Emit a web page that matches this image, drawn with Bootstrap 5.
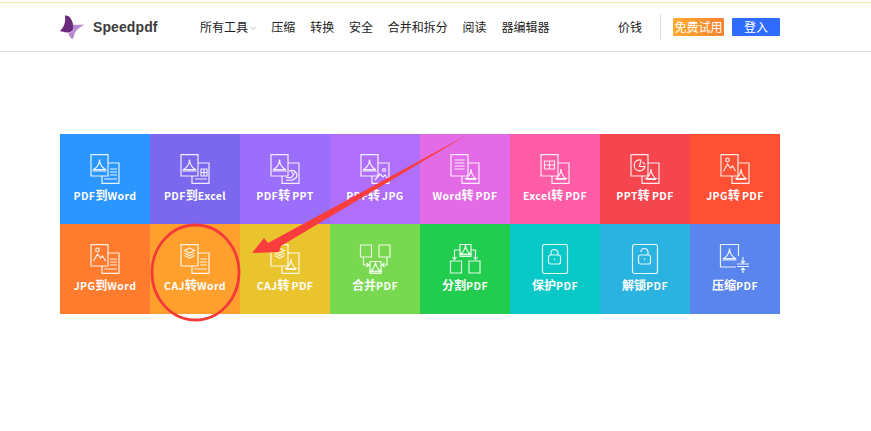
<!DOCTYPE html>
<html lang="zh">
<head>
<meta charset="utf-8">
<title>Speedpdf</title>
<link href="https://cdn.jsdelivr.net/npm/bootstrap@5.3.0/dist/css/bootstrap.min.css" rel="stylesheet">
<style>
body{background:#fff;font-family:"Noto Sans CJK SC","Liberation Sans",sans-serif;overflow:hidden;height:431px;position:relative}
.top-strip{background:#fff;border-bottom:1px solid #fde9a6;height:2px;box-sizing:content-box}
.site-head{border-bottom:1px solid #e2e2e2;padding:0 91px 0 60px;box-sizing:content-box;height:48px}
.logo-mark{width:26px;height:26px;flex:none}
.logo-name{font:700 14px/1 "Liberation Sans",sans-serif;color:#3c3c3c;margin-left:7px;width:64px;letter-spacing:.1px}
.nav-zone{margin-left:43px;gap:14.8px;font-size:12px;color:#222;line-height:18px}
.nav-chev{width:10px;height:6px;margin-top:2px;margin-right:-1.5px}
.price-link{margin-left:auto;font-size:12px;color:#222}
.head-rule{width:1px;height:26px;background:#ddd;margin:0 12px 0 18px}
.try-btn,.login-btn{height:18px;font-size:12px;line-height:18px;color:#fff;text-align:center;border-radius:1px}
.try-btn{width:51px;background:linear-gradient(90deg,#ffab2e,#f58132)}
.login-btn{width:48px;background:#2e6cff;margin-left:8px}
.tool-grid{display:grid;grid-template-columns:repeat(8,90px);grid-auto-rows:90px;margin:82px 0 0 60px}
.tool-tile{padding-top:20px;color:#fff;text-decoration:none}
.tool-icon{width:30px;height:30px;margin-left:30px;display:block;overflow:visible;fill:none;stroke:#fff;stroke-width:1.2;stroke-opacity:.88}
.tool-name{font-size:10.5px;font-weight:700;line-height:14px;text-align:center;margin-top:4px;letter-spacing:.4px;white-space:nowrap}
.cjk-part{font-size:12px;letter-spacing:0}
.cjk-gap{margin-right:2px}
.t1{background:#2b96ff}.t2{background:#7b68ee}.t3{background:#9b6ffb}.t4{background:#b06ffb}
.t5{background:#e36ce6}.t6{background:#ff5ca8}.t7{background:#f5464f}.t8{background:#ff5033}
.t9{background:#ff7b2e}.t10{background:#ff9f2e}.t11{background:#eac42e}.t12{background:#78d84f}
.t13{background:#22cc4f}.t14{background:#08c8c8}.t15{background:#2ab2e0}.t16{background:#5a85ec}
.mark-layer{position:absolute;left:0;top:0;width:871px;height:431px;pointer-events:none}
</style>
</head>
<body>
<svg width="0" height="0" class="position-absolute">
<defs>
<g id="g-pdf"><path d="M0-6.500C0-2-3 2.500-6.500 3.500H6.500C3 2.500 0-2 0-6.500ZM-7 4.800H7"/></g>
<g id="g-pdfs"><path d="M0-6C0-2-2.500 2-5 3.500H5C2.500 2 0-2 0-6ZM-5 4.500H5"/></g>
<g id="g-word"><path d="M-5-5H5M-5-2H5M-5 1H5M-5 4H5"/></g>
<g id="g-back-word"><path d="M-1-5H6M-1-2H6M-1 1H6M-7 5H6"/></g>
<g id="g-back-xls"><path d="M0-5H6V2H0ZM3-5V2M0-1.500H6M-6 5H6"/></g>
<g id="g-back-ppt"><path d="M-2-3C2-5 6-2 6 1C6 5 1 7-5 6M-5 3C0 5 3 3 2-1M0-3L3 1M3-1L6-1"/></g>
<g id="g-back-img"><path d="M-6 6L-1 0L2 3L4 1L7 5"/><circle cx="3" cy="-4" r="1.500"/></g>
<g id="g-xls"><path d="M-5-4H5V4H-5ZM0-4V4M-5 0H5"/></g>
<g id="g-ppt"><path d="M1.500-5A5.500 5.500 0 1 0 5.500 1.500H0Z M2.500-2.500A3 3 0 0 1 5.500-.5"/></g>
<g id="g-img"><path d="M-6 6L-2-1L1 3L3 1L6 6"/><circle cx="-2" cy="-5" r="1.800"/></g>
<g id="g-caj"><path d="M0-6L5-3.500L0-1L-5-3.500ZM-5-1L0 1.500L5-1M-5 1.500L0 4L5 1.500"/></g>
<path id="f-front" d="M1 .7H18V22H1Z"/>
<path id="f-back" d="M18 9H29V29.300H12V22"/>
</defs>
</svg>

<div class="top-strip"></div>
<header class="site-head d-flex align-items-center">
  <svg class="logo-mark" viewBox="60 14 26 26"><path fill="#6b2a7c" d="M65 15.500C70 15 72 20 73 24C75 29 72 33 67 32.500C64 32 62 31.500 60 31C63 28 66 24 65 15.500Z"/><path fill="#b88ad0" d="M69 24C74 25 79 25 84 24.500C80 28 76 29 74.500 34C74 37 73 39 72 39C69 37 69 34 68 32.600C72 33 75 29 73.500 25Z"/></svg>
  <span class="logo-name">Speedpdf</span>
  <nav class="nav-zone d-flex align-items-center">
    <span class="d-flex align-items-center">所有工具<svg class="nav-chev" viewBox="0 0 10 6" fill="none" stroke="#bbb" stroke-width="1"><path d="M2 1.500L5 4.500L8 1.500"/></svg></span>
    <span>压缩</span><span>转换</span><span>安全</span><span>合并和拆分</span><span>阅读</span><span>器编辑器</span>
  </nav>
  <span class="price-link">价钱</span>
  <span class="head-rule"></span>
  <span class="try-btn">免费试用</span>
  <span class="login-btn">登入</span>
</header>

<main class="tool-grid">
  <a class="tool-tile t1"><svg class="tool-icon" viewBox="0 0 30 30"><use href="#f-front"/><use href="#g-pdf" x="9.500" y="12"/><use href="#f-back"/><use href="#g-back-word" x="21" y="20"/></svg><div class="tool-name">PDF<span class="cjk-part">到</span>Word</div></a>
  <a class="tool-tile t2"><svg class="tool-icon" viewBox="0 0 30 30"><use href="#f-front"/><use href="#g-pdf" x="9.500" y="12"/><use href="#f-back"/><use href="#g-back-xls" x="21" y="20"/></svg><div class="tool-name">PDF<span class="cjk-part">到</span>Excel</div></a>
  <a class="tool-tile t3"><svg class="tool-icon" viewBox="0 0 30 30"><use href="#f-front"/><use href="#g-pdf" x="9.500" y="12"/><use href="#f-back"/><use href="#g-back-ppt" x="21" y="20"/></svg><div class="tool-name">PDF<span class="cjk-part cjk-gap">转</span>PPT</div></a>
  <a class="tool-tile t4"><svg class="tool-icon" viewBox="0 0 30 30"><use href="#f-front"/><use href="#g-pdf" x="9.500" y="12"/><use href="#f-back"/><use href="#g-back-img" x="21" y="20"/></svg><div class="tool-name">PDF<span class="cjk-part cjk-gap">转</span>JPG</div></a>
  <a class="tool-tile t5"><svg class="tool-icon" viewBox="0 0 30 30"><use href="#f-front"/><use href="#g-word" x="9.500" y="11"/><use href="#f-back"/><use href="#g-pdfs" x="21" y="21"/></svg><div class="tool-name">Word<span class="cjk-part cjk-gap">转</span>PDF</div></a>
  <a class="tool-tile t6"><svg class="tool-icon" viewBox="0 0 30 30"><use href="#f-front"/><use href="#g-xls" x="9.500" y="11"/><use href="#f-back"/><use href="#g-pdfs" x="21" y="21"/></svg><div class="tool-name">Excel<span class="cjk-part cjk-gap">转</span>PDF</div></a>
  <a class="tool-tile t7"><svg class="tool-icon" viewBox="0 0 30 30"><use href="#f-front"/><use href="#g-ppt" x="9.500" y="11"/><use href="#f-back"/><use href="#g-pdfs" x="21" y="21"/></svg><div class="tool-name">PPT<span class="cjk-part cjk-gap">转</span>PDF</div></a>
  <a class="tool-tile t8"><svg class="tool-icon" viewBox="0 0 30 30"><use href="#f-front"/><use href="#g-img" x="9.500" y="11"/><use href="#f-back"/><use href="#g-pdfs" x="21" y="21"/></svg><div class="tool-name">JPG<span class="cjk-part cjk-gap">转</span>PDF</div></a>
  <a class="tool-tile t9"><svg class="tool-icon" viewBox="0 0 30 30"><use href="#f-front"/><use href="#g-img" x="9.500" y="11"/><use href="#f-back"/><use href="#g-back-word" x="21" y="20"/></svg><div class="tool-name">JPG<span class="cjk-part">到</span>Word</div></a>
  <a class="tool-tile t10"><svg class="tool-icon" viewBox="0 0 30 30"><use href="#f-front"/><use href="#g-caj" x="9.500" y="10"/><use href="#f-back"/><use href="#g-back-word" x="21" y="20"/></svg><div class="tool-name">CAJ<span class="cjk-part">转</span>Word</div></a>
  <a class="tool-tile t11"><svg class="tool-icon" viewBox="0 0 30 30"><use href="#f-front"/><use href="#g-caj" x="9.500" y="10"/><use href="#f-back"/><use href="#g-pdfs" x="21" y="21"/></svg><div class="tool-name">CAJ<span class="cjk-part cjk-gap">转</span>PDF</div></a>
  <a class="tool-tile t12"><svg class="tool-icon" viewBox="0 0 30 30"><path d="M.5 1H11.500V13H.5ZM19 1H30V13H19ZM10 17.500H21V29.500H10Z"/><use href="#g-pdfs" x="15.500" y="23.500"/><path d="M3.500 13V21H8.500M6.500 19L9 21L6.500 23M27 13V21H22.500M24.500 19L22 21L24.500 23"/></svg><div class="tool-name"><span class="cjk-part">合并</span>PDF</div></a>
  <a class="tool-tile t13"><svg class="tool-icon" viewBox="0 0 30 30"><path d="M10 .5H21V12.500H10ZM.5 17H11.500V29H.5ZM19 17H30V29H19Z"/><use href="#g-pdfs" x="15.500" y="6.500"/><path d="M10 6H4.500V15M2.500 13L4.500 15.500L6.500 13M21 6H25.500V15M23.500 13L25.500 15.500L27.500 13"/></svg><div class="tool-name"><span class="cjk-part">分割</span>PDF</div></a>
  <a class="tool-tile t14"><svg class="tool-icon" viewBox="0 0 30 30"><rect x="2.500" y=".5" width="25" height="29" rx="2"/><rect x="8.500" y="11" width="12" height="9" rx="2"/><path d="M11 11V9A3.500 3.500 0 0 1 18 9V11M14.500 14.500V16"/></svg><div class="tool-name"><span class="cjk-part">保护</span>PDF</div></a>
  <a class="tool-tile t15"><svg class="tool-icon" viewBox="0 0 30 30"><rect x="2.500" y=".5" width="25" height="29" rx="2"/><rect x="8.500" y="11" width="12" height="9" rx="2"/><path d="M11 8A3.500 3.500 0 0 1 18 8V11M14.500 14.500V16"/></svg><div class="tool-name"><span class="cjk-part">解锁</span>PDF</div></a>
  <a class="tool-tile t16"><svg class="tool-icon" viewBox="0 0 30 30"><path d="M18.500 12V.5H.5V23H16"/><use href="#g-pdf" x="9.500" y="11"/><path d="M17 20H29M17 22.500H29M23 13V19M21 17L23 19L25 17M23 29V24M21 26L23 24L25 26"/></svg><div class="tool-name"><span class="cjk-part">压缩</span>PDF</div></a>
</main>

<svg class="mark-layer" viewBox="0 0 871 431">
  <ellipse cx="195.500" cy="272.500" rx="43.500" ry="47.500" fill="none" stroke="#f53a3a" stroke-width="2.800"/>
  <path fill="#f93c3c" d="M252 253L264 238L268 243L467 135L281 246L279 252Z"/>
</svg>
</body>
</html>
